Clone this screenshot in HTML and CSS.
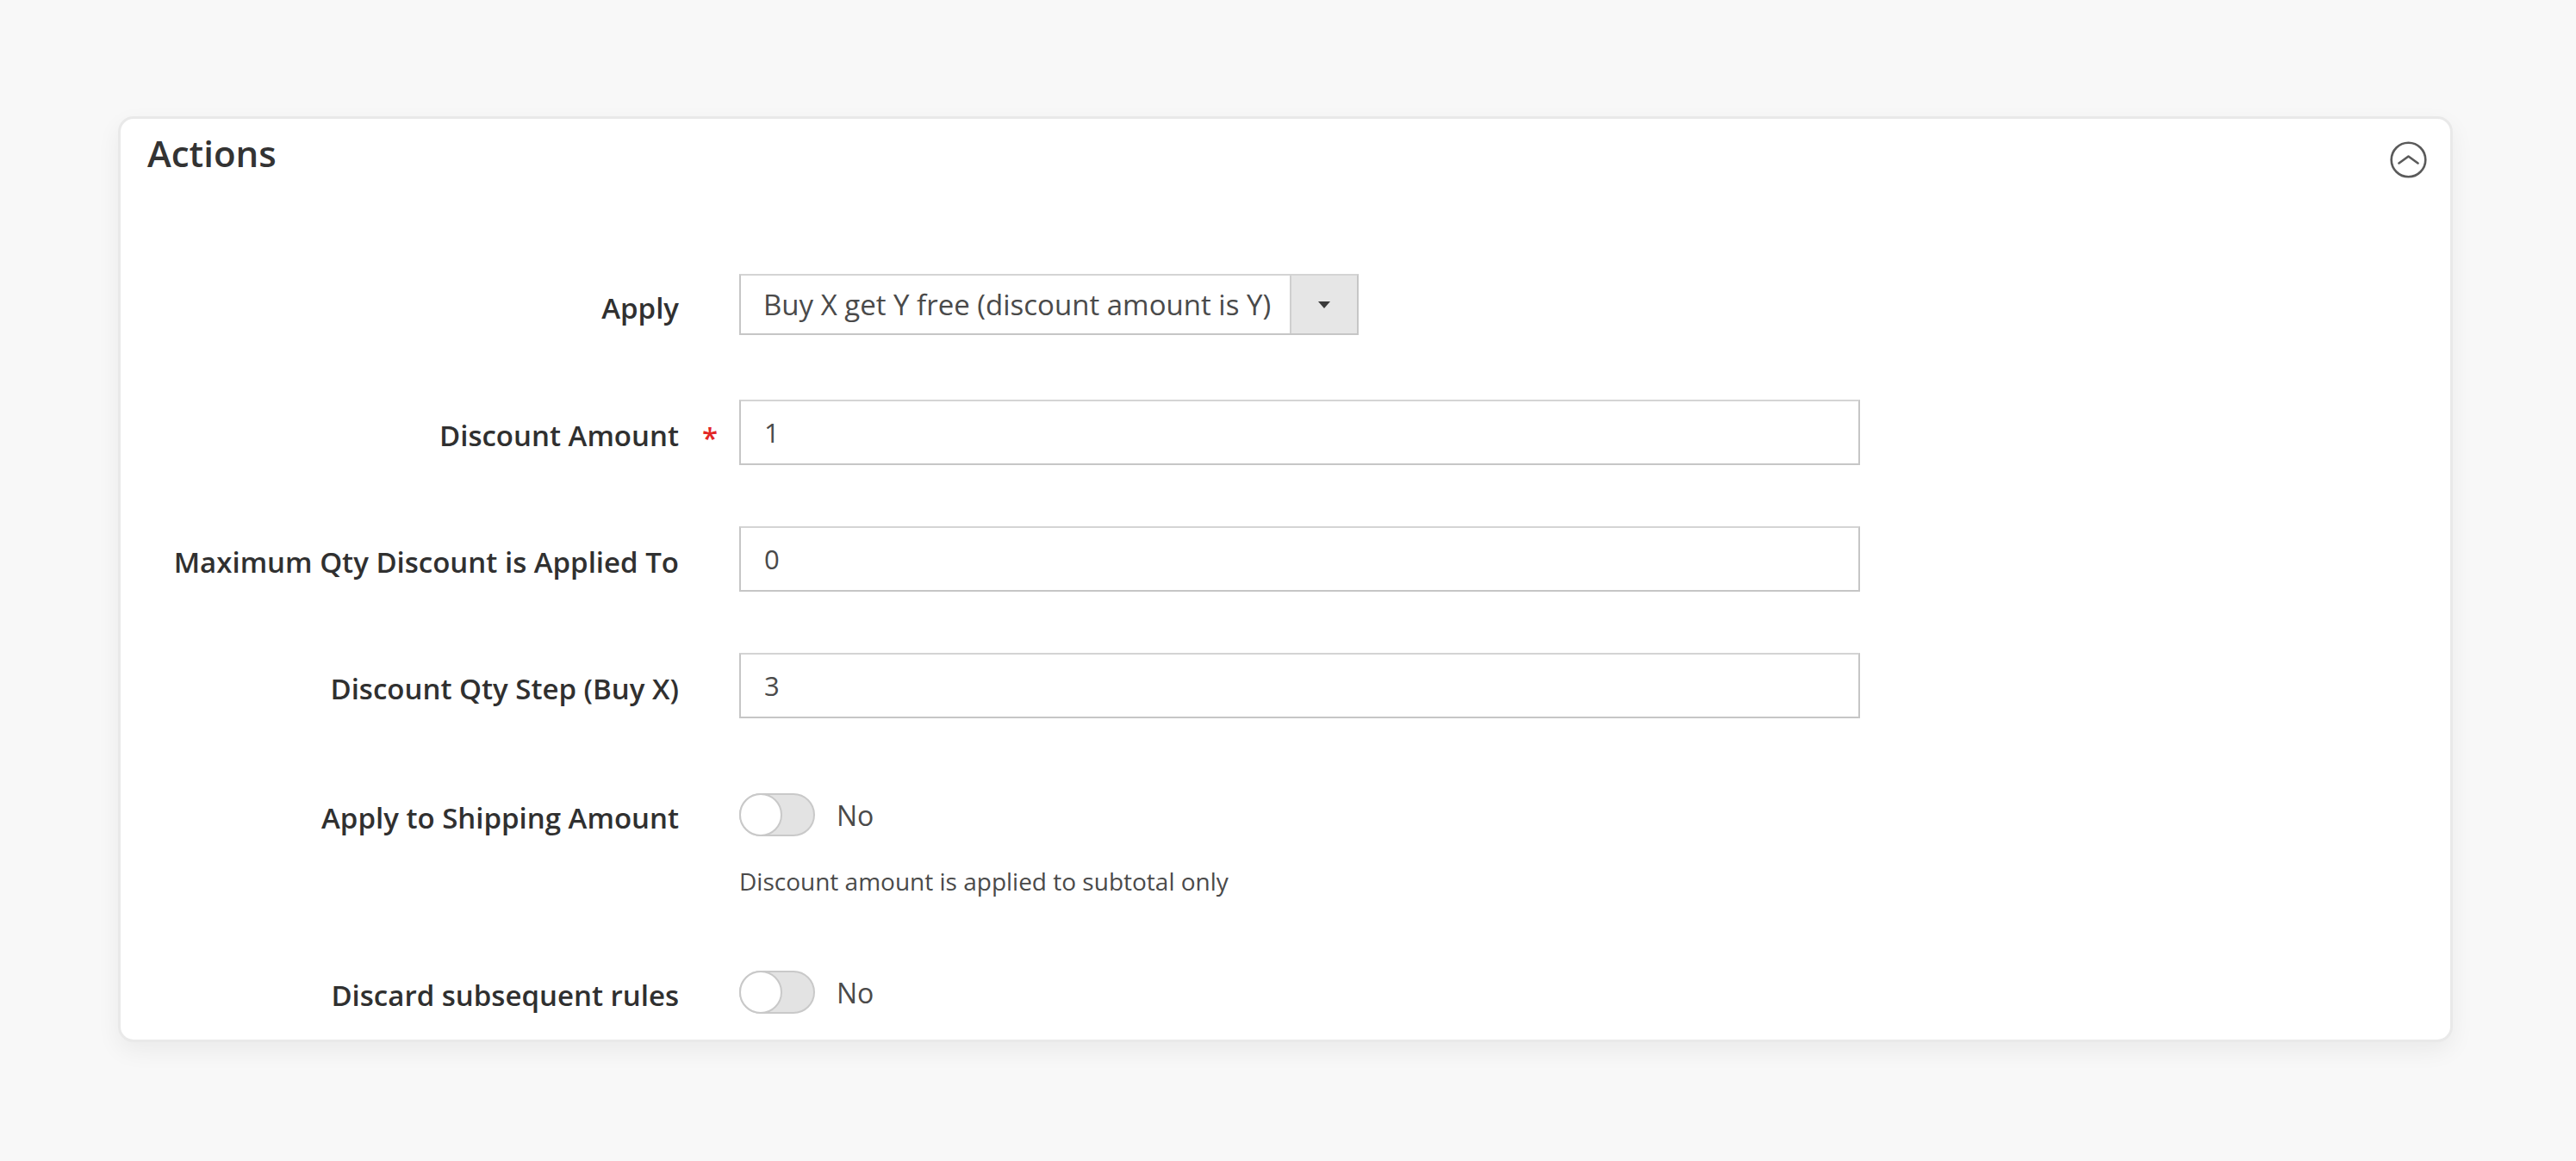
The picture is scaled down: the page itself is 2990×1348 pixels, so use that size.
FILE: index.html
```html
<!DOCTYPE html>
<html lang="en">
<head>
<meta charset="utf-8">
<title>Actions</title>
<link rel="stylesheet" href="styles.css">
</head>
<body>
<section class="card">
  <header class="card-head">
    <h2 class="card-title">Actions</h2>
    <button class="collapse" type="button" aria-label="Collapse">
      <svg width="43" height="43" viewBox="0 0 43 43">
        <circle cx="21.5" cy="21.5" r="19.8" fill="none" stroke="#5a5a5a" stroke-width="2.6"/>
        <polyline points="10.5,25.5 21.5,17.5 32.5,25.5" fill="none" stroke="#5a5a5a" stroke-width="2.6" stroke-linecap="round" stroke-linejoin="round"/>
      </svg>
    </button>
  </header>

  <div class="form">
    <div class="field field-select">
      <div class="label">Apply</div>
      <div class="req"></div>
      <div class="control">
        <div class="select">
          <span class="select-value">Buy X get Y free (discount amount is Y)</span>
          <span class="select-arrow"><span class="tri"></span></span>
        </div>
      </div>
    </div>

    <div class="field gap-75">
      <div class="label">Discount Amount</div>
      <div class="req">*</div>
      <div class="control"><div class="input">1</div></div>
    </div>

    <div class="field gap-71">
      <div class="label">Maximum Qty Discount is Applied To</div>
      <div class="req"></div>
      <div class="control"><div class="input">0</div></div>
    </div>

    <div class="field gap-71">
      <div class="label">Discount Qty Step (Buy X)</div>
      <div class="req"></div>
      <div class="control"><div class="input">3</div></div>
    </div>

    <div class="field gap-74">
      <div class="label">Apply to Shipping Amount</div>
      <div class="req"></div>
      <div class="control">
        <div class="switch-line">
          <span class="switch"><span class="knob"></span></span>
          <span class="switch-text">No</span>
        </div>
        <div class="note">Discount amount is applied to subtotal only</div>
      </div>
    </div>

    <div class="field gap-73">
      <div class="label">Discard subsequent rules</div>
      <div class="req"></div>
      <div class="control">
        <div class="switch-line">
          <span class="switch"><span class="knob"></span></span>
          <span class="switch-text">No</span>
        </div>
      </div>
    </div>
  </div>
</section>
</body>
</html>
```
FILE: styles.css
```css
html, body {
  margin: 0;
  padding: 0;
}

body {
  background: #f8f8f8;
  font-family: "Open Sans", "Liberation Sans", sans-serif;
  color: #333333;
  width: 2990px;
  height: 1348px;
  overflow: hidden;
}

.card {
  box-sizing: border-box;
  width: 2710px;
  margin: 135px 0 0 137px;
  background: #ffffff;
  border: 3px solid #e9e9e9;
  border-radius: 18px;
  box-shadow: 0 10px 28px rgba(0, 0, 0, 0.06);
  padding: 15px 27px 17px 31px;
}

.card-head {
  display: flex;
  justify-content: space-between;
  align-items: flex-start;
}

.card-title {
  margin: 0;
  font-size: 42px;
  line-height: 50px;
  font-weight: 600;
  color: #333333;
}

.collapse {
  margin: 11px 0 0 0;
  padding: 0;
  border: 0;
  background: transparent;
  width: 43px;
  height: 43px;
  display: block;
}

.collapse svg {
  display: block;
}

.form {
  margin-top: 111px;
}

.field {
  display: grid;
  grid-template-columns: 617px 70px 1fr;
  align-items: start;
}

.gap-71 { margin-top: 71px; }
.gap-73 { margin-top: 73px; }
.gap-74 { margin-top: 74px; }
.gap-75 { margin-top: 75px; }

.label {
  height: 76px;
  display: flex;
  align-items: center;
  justify-content: flex-end;
  padding-top: 6px;
  box-sizing: border-box;
  font-size: 33px;
  font-weight: 600;
  color: #303030;
  white-space: nowrap;
}

.req {
  height: 76px;
  display: flex;
  align-items: center;
  justify-content: center;
  padding-top: 12px;
  padding-left: 2px;
  box-sizing: border-box;
  font-size: 33px;
  font-weight: 600;
  color: #e22626;
}

.field-select .label,
.field-select .req {
  height: 71px;
}

.field-select .label {
  padding-top: 8px;
}

.select {
  box-sizing: border-box;
  width: 719px;
  height: 71px;
  display: flex;
  border: 2px solid #c6c6c6;
  border-top-color: #d4d4d4;
  background: #ffffff;
}

.select-value {
  flex: 1;
  display: flex;
  align-items: center;
  padding-left: 26px;
  font-size: 33px;
  color: #4a4a4a;
  white-space: nowrap;
}

.select-arrow {
  width: 76px;
  display: flex;
  align-items: center;
  justify-content: center;
  background: #e6e6e6;
  border-left: 2px solid #cfcfcf;
}

.tri {
  width: 0;
  height: 0;
  border-left: 7px solid transparent;
  border-right: 7px solid transparent;
  border-top: 8px solid #3a3a3a;
}

.input {
  box-sizing: border-box;
  width: 1301px;
  height: 76px;
  display: flex;
  align-items: center;
  padding-left: 27px;
  border: 2px solid #c6c6c6;
  border-top-color: #d4d4d4;
  background: #ffffff;
  font-size: 31px;
  color: #4a4a4a;
}

.switch-line {
  height: 76px;
  display: flex;
  align-items: center;
  gap: 25px;
}

.switch {
  box-sizing: border-box;
  position: relative;
  width: 88px;
  height: 50px;
  border-radius: 25px;
  background: #e3e3e3;
  border: 2px solid #c9c9c9;
  display: block;
}

.knob {
  position: absolute;
  left: -2px;
  top: -2px;
  box-sizing: border-box;
  width: 50px;
  height: 50px;
  border-radius: 50%;
  background: #ffffff;
  border: 2px solid #c9c9c9;
}

.switch-text {
  font-size: 32px;
  color: #4a4a4a;
}

.note {
  margin-top: 21px;
  font-size: 28px;
  line-height: 36px;
  color: #4a4a4a;
  white-space: nowrap;
}
```
